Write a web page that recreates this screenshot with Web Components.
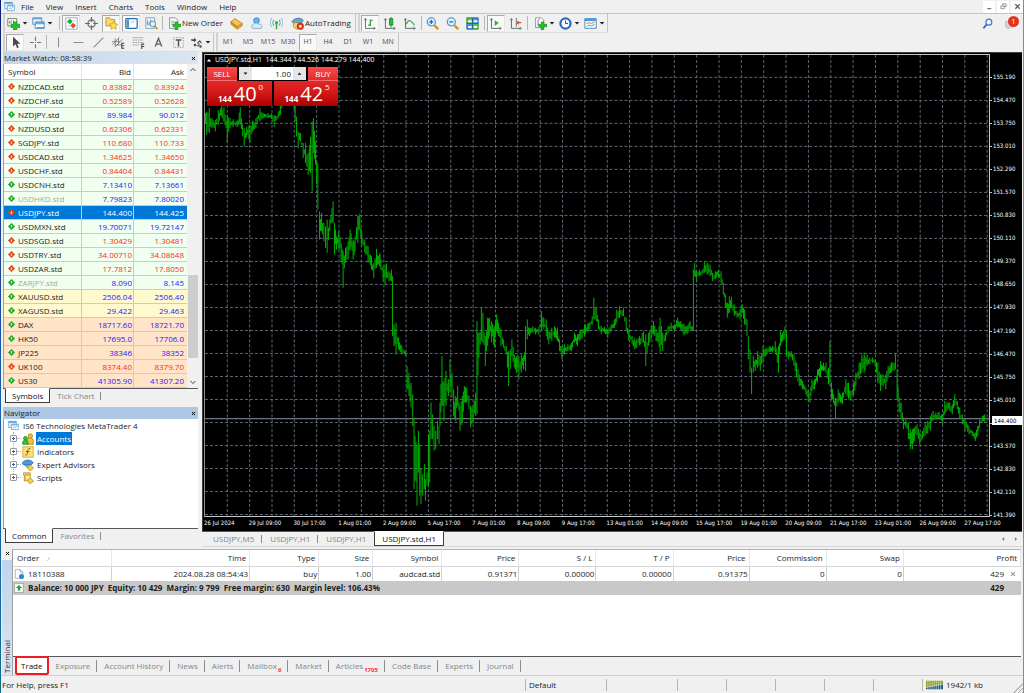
<!DOCTYPE html>
<html lang="en">
<head>
<meta charset="utf-8">
<meta name="viewport" content="width=device-width, initial-scale=1">
<title>MetaTrader 4</title>
<style>
    html, body {
        margin: 0;
        height: 100%;
    }
    body {
        --face: #f0f0f0;
        --line: #c4c4c4;
        --edge: #55585c;
        --muted: #858585;
        --up: #2222ff;
        --down: #ff2a20;
        --accent: #0078d7;
        --chart-font: "DejaVu Sans Condensed", "DejaVu Sans", sans-serif;
        font-family: "Open Sans", "Noto Sans", sans-serif;
        font-size: 8px;
        line-height: 12px;
        color: #1c1c1c;
        background: var(--face);
    }
</style>
</head>
<body>
<terminal-app></terminal-app>

<script>
const frame = '<path d="M3 2v12h12M1.5 4 3 2l1.5 2M13 12.500l2 1.500-2 1.500" fill="none" stroke="#5f6c6c" stroke-width="1.200"/>';

const ICONS = {
    app: '<path d="M1 2h11v9H1z" fill="#e8f4fd" stroke="#4a9bd0"/><path d="M1 2h11v2H1z" fill="#4a9bd0"/><path d="M5 6h10v8H5z" fill="#fff" stroke="#4a9bd0"/><path d="M5 6h10v2H5z" fill="#6db5e2"/><path d="M7 12l2-2 2 1 2-2" fill="none" stroke="#4a9bd0"/>',
    newChart: '<path d="M1 2h11v9H1z" fill="#fff" stroke="#4d6f4f"/><path d="M3 8V5M5 9V4M8 7V4" stroke="#2d9b3a"/><path d="M8 6h4v3h4v4h-4v3H8v-3H5V9h3z" fill="#25c22c" stroke="#0b7d16" stroke-width=".7"/>',
    profiles: '<path d="M1 1h11v8H1z" fill="#eef6fd" stroke="#3b7cb5"/><path d="M1 1h11v2H1z" fill="#69a7dc"/><path d="M4 6h11v8H4z" fill="#fff" stroke="#3b7cb5"/><path d="M4 6h11v3H4z" fill="#69a7dc"/><path d="M6 13h9" stroke="#3b7cb5"/>',
    watch: '<path d="M1 1h14v14H1z" fill="#fff" stroke="#6ea3d6"/><path d="M6 2l3.500 3.500L6 9 2.500 5.500z" fill="#1ea92f"/><path d="M10 7l3.500 3.500L10 14l-3.500-3.500z" fill="#e44b22"/><path d="M9 5h4M3 11h3" stroke="#b9cde0"/>',
    target: '<circle cx="8" cy="8" r="4.500" fill="none" stroke="#6b6b6b" stroke-width="1.500"/><path d="M8 0v6M8 10v6M0 8h6M10 8h6" stroke="#6b6b6b" stroke-width="1.500"/>',
    folderStar: '<path d="M1 3V1h5l1 2h5v8H1z" fill="#ffd96b" stroke="#c28a18"/><path d="M10.500 5l1.700 3.300 3.600.5-2.600 2.600.6 3.600-3.300-1.700L7.200 15l.6-3.600L5.200 8.800l3.600-.5z" fill="#ffe04c" stroke="#c48a12" stroke-width=".8"/>',
    panel: '<rect x="1" y="2" width="14" height="12" rx="1" fill="#fff" stroke="#2d6ba8" stroke-width="1.500"/><path d="M2 3h3v10H2z" fill="#4c93d8"/><path d="M7 5h6M7 7h4" stroke="#b9cde0"/>',
    tester: '<path d="M1 1h11v13H1z" fill="#eef5fb" stroke="#7195b7"/><path d="M3 4v6M5 6v5M7 3v6" stroke="#5584b5"/><circle cx="9.500" cy="8.500" r="3.500" fill="#d9efff" stroke="#4b7ba9"/><path d="M12 11l3.500 4" stroke="#c98e23" stroke-width="2"/>',
    order: '<path d="M2 1h7l3 3v10H2z" fill="#fff" stroke="#71817f"/><path d="M4 5h4M4 7h6M4 9h3" stroke="#8b9b99"/><path d="M9 6h3v3h4v3h-4v4H9v-4H6V9h3z" fill="#25c22c" stroke="#0b7d16" stroke-width=".7"/>',
    gold: '<path d="M1 6 6 2l9 6-6 4z" fill="#f8c64f" stroke="#b07a12"/><path d="M1 6l8 6v3L1 9z" fill="#d9971e" stroke="#b07a12" stroke-width=".7"/><path d="M9 12l6-4v3l-6 4z" fill="#f0ab2c" stroke="#b07a12" stroke-width=".7"/>',
    cloud: '<circle cx="8" cy="4.500" r="3.500" fill="#65b5ee" stroke="#2f7dc0"/><path d="M5 7h6v4H5z" fill="#65b5ee"/><path d="M3 14a3 3 0 0 1 1-5c1-2 6-2 7 0a3 3 0 0 1 3 5z" fill="#d8e9f8" stroke="#7ba6cd"/>',
    signal: '<circle cx="8" cy="7" r="2" fill="#39b54a"/><path d="M5 3.500a5 5 0 0 0 0 7M11 3.500a5 5 0 0 1 0 7" fill="none" stroke="#4a9bd0" stroke-width="1.300"/><path d="M2.500 1.500a8 8 0 0 0 0 11M13.500 1.500a8 8 0 0 1 0 11" fill="none" stroke="#9ac6e6" stroke-width="1.300"/><path d="M8 8v7" stroke="#39b54a" stroke-width="2"/>',
    auto: '<path d="M1 6c3-5 10-6 14-2l-2 3H4z" fill="#5aa9dd" stroke="#2a6ea6"/><path d="M3 7h9v5l-5 3-4-3z" fill="#f7cf63" stroke="#bb8a20"/><circle cx="11.500" cy="11.500" r="4" fill="#e03423" stroke="#a51c10" stroke-width=".7"/><path d="M10 10h3v3h-3z" fill="#fff"/>',
    bars: frame + '<path d="M9 3v8M9 4h3M9 10H6.500" stroke="#1b9e2a" stroke-width="1.500" fill="none"/>',
    candle: frame + '<path d="M10 0v13" stroke="#14801f"/><path d="M8 2h4v8H8z" fill="#1fc531" stroke="#14801f"/>',
    line: frame + '<path d="M4 9c3-7 6-5 10 1" fill="none" stroke="#3fa551" stroke-width="1.500"/>',
    zoomIn: '<path d="M10 10l5 5" stroke="#d39a2a" stroke-width="3"/><circle cx="6.500" cy="6" r="5" fill="#dff0fd" stroke="#3c86cb" stroke-width="1.300"/><path d="M4 6h5M6.500 3.500v5" stroke="#1d67b5" stroke-width="1.500"/>',
    zoomOut: '<path d="M10 10l5 5" stroke="#d39a2a" stroke-width="3"/><circle cx="6.500" cy="6" r="5" fill="#dff0fd" stroke="#3c86cb" stroke-width="1.300"/><path d="M4 6h5" stroke="#1d67b5" stroke-width="1.500"/>',
    tile: '<path d="M1 1h7v7H1zM8 8h7v7H8z" fill="#55c43f" stroke="#2b7f21"/><path d="M8 1h7v7H8zM1 8h7v7H1z" fill="#4a8fe6" stroke="#2458a6"/><path d="M2.500 4H7v2.500H2.500zM9.500 4H14v2.500H9.500zM2.500 11H7v2.500H2.500zM9.500 11H14v2.500H9.500z" fill="#eef6ff"/>',
    scroll: frame + '<path d="M7 4l5 3.500L7 11z" fill="#2cab3a"/>',
    shift: frame + '<path d="M9 1v11" stroke="#4b5a5a"/><path d="M15 7h-5M12 5l-2 2 2 2" stroke="#d2502c" stroke-width="1.500" fill="none"/>',
    indicators: '<path d="M2 1h7l3 3v9H2z" fill="#fff" stroke="#718190"/><path d="M7 3c-2 0-2 1-2 3v5" fill="none" stroke="#55636d"/><path d="M9 6h3v3h4v3h-4v4H9v-4H6V9h3z" fill="#25c22c" stroke="#0b7d16" stroke-width=".7"/>',
    clock: '<circle cx="8" cy="8" r="7" fill="#2e75c8" stroke="#174f91"/><circle cx="8" cy="8" r="4.800" fill="#f5faff"/><path d="M8 4.500V8h3" fill="none" stroke="#32455c" stroke-width="1.200"/>',
    template: '<path d="M1 2h14v12H1z" fill="#f4faff" stroke="#3a7cbc"/><path d="M1 2h14v3H1z" fill="#4d97dc"/><path d="M3 8l3-1 3 1 4-2" fill="none" stroke="#d05a41"/><path d="M3 12l3-2 3 1 4-2" fill="none" stroke="#36a455"/>',
    cursor: '<path d="M5 1v12l3-3 2 5 2-1-2-4.500h4z" fill="#474747"/>',
    cross: '<path d="M8 1v5M8 10v5M1 8h5M10 8h5" stroke="#757575" stroke-width="1.300"/><path d="M7.500 7.500h1v1h-1z" fill="#757575"/>',
    vline: '<path d="M8 2v12" stroke="#8a8a8a" stroke-width="1.300"/>',
    hline: '<path d="M2 8h12" stroke="#8a8a8a" stroke-width="1.300"/>',
    trend: '<path d="M2 14 14 2" stroke="#8a8a8a" stroke-width="1.300"/>',
    channel: '<path d="M0 11 9 2M3 14 13 4M0 7h10M3 11h9M4 3v9M8 2v9" stroke="#777"/><path d="M15 9h-3v6h3M12 12h3" fill="none" stroke="#444" stroke-width="1.300"/>',
    fibo: '<path d="M1 2h13M1 5h13M1 8h13M1 11h9" stroke="#888" stroke-dasharray="2 1"/><path d="M15 10h-3v6M12 13h3" fill="none" stroke="#444" stroke-width="1.300"/>',
    textA: '<path d="M4 13 8 3l4 10M5.500 10h5" fill="none" stroke="#666" stroke-width="1.800"/>',
    label: '<path d="M2 2h12v12H2z" fill="none" stroke="#888" stroke-dasharray="1.500 1.500"/><path d="M4.500 5h7M8 5v8" stroke="#555" stroke-width="1.800"/>',
    arrows: '<path d="M1 4h4V2l3 3-3 3V6H2z" fill="#4c4c4c"/><path d="M9 9l3-3 2 3M11 9v3H8" fill="none" stroke="#4c4c4c" stroke-width="1.300"/><circle cx="6" cy="11" r="1.500" fill="#4c4c4c"/><circle cx="13" cy="13" r="1.500" fill="#4c4c4c"/>',
    search: '<path d="M7 9l-5 6" stroke="#2b5cc4" stroke-width="2.500"/><circle cx="10" cy="6" r="4.300" fill="#eef4ff" stroke="#3d6fd6" stroke-width="1.600"/>',
    chat: '<path d="M1 5h11v8H8l-4 3v-3H1z" fill="#d7d7de" stroke="#a9a9b4"/>',
    up: '<path d="M8 0l8 8-8 8-8-8z" fill="#1fa32e"/><path d="M8 4l3 3.500H9V11H7V7.500H5z" fill="#c9f5c9"/>',
    down: '<path d="M8 0l8 8-8 8-8-8z" fill="#d9481a"/><path d="M8 12l3-3.500H9V5H7v3.500H5z" fill="#ffd2bd"/>',
    accounts: '<circle cx="11" cy="4" r="3" fill="#f2c33c" stroke="#a87b14"/><path d="M7 15V9c0-3 8-3 8 0v6z" fill="#f2c33c" stroke="#a87b14"/><circle cx="4.500" cy="7" r="2.500" fill="#35c43f" stroke="#188322"/><path d="M1 15v-3c0-3 7-3 7 0v3z" fill="#35c43f" stroke="#188322"/>',
    fx: '<path d="M1 1h14v14H1z" fill="#fbe27c" stroke="#c9a227"/><path d="M11 3.500c-3-1-3 2-3.500 4.500S6.500 13 4.500 12M5 7.500h5" fill="none" stroke="#7a5b0c" stroke-width="1.300"/>',
    expert: '<path d="M0 6c3-6 12-6 15-1l-3 3H3z" fill="#4c9ad6" stroke="#2a6ea6"/><path d="M4 8h7l-1 3H6z" fill="#8cc3ec" stroke="#2a6ea6" stroke-width=".7"/><path d="M11 8l4.500 4-4.500 4-4-4z" fill="#f7cf4c" stroke="#b98a18"/>',
    script: '<path d="M2 1h9v3H5v8H3V4H2z" fill="#f6d76b" stroke="#bb8f22"/><path d="M4 4h7v7H4z" fill="#fae7a0" stroke="#bb8f22"/><path d="M11 8l4.500 4-4.500 4-4-4z" fill="#f7cf4c" stroke="#b98a18"/>',
    trade: '<path d="M2 1h8l4 4v10H2z" fill="#fff" stroke="#7d8a96"/><path d="M10 1v4h4" fill="none" stroke="#7d8a96"/><circle cx="12" cy="12" r="4" fill="#2189d6"/>',
    balance: '<path d="M1 1h14v14H1z" fill="#fff" stroke="#8c8c8c"/><path d="M8 3l5 5h-3v4H6V8H3z" fill="#22a52e"/>',
    close: '<path d="M3 3l10 10M13 3 3 13" stroke="currentColor" stroke-width="3"/>',
    minimize: '<path d="M3 13h9" stroke="#5b6470" stroke-width="2.500"/>',
    restore: '<path d="M6 6V2h8v6h-4M2 7h8v6H2z" fill="none" stroke="#5b6470" stroke-width="1.500"/>',
    chevronUp: '<path d="M3 10l5-5 5 5" fill="none" stroke="#404040" stroke-width="2"/>',
    chevronDown: '<path d="M3 6l5 5 5-5" fill="none" stroke="#404040" stroke-width="2"/>',
    left: '<path d="M11 3v10L5 8z" fill="#777"/>',
    right: '<path d="M5 3v10l6-5z" fill="#777"/>',
    triUp: '<path d="M2 12h12L8 5z" fill="currentColor"/>',
    triDown: '<path d="M2 5h12l-6 7z" fill="currentColor"/>',
    connection: '<path d="M0 0h32v6L0 12z" fill="#8aa32a"/><path d="M0 16v-3L32 7v9z" fill="#1f5c84"/><path d="M3.500 0v16M7.500 0v16M11.500 0v16M15.500 0v16M19.500 0v16M23.500 0v16M27.500 0v16" stroke="#f0f0f0"/>'
};

class MtIcon extends HTMLElement {
    constructor() {
        super();
        this.attachShadow({ mode: 'open' });
    }

    connectedCallback() {
        const name = this.getAttribute('name');
        const width = name === 'connection' ? 32 : 16;
        this.shadowRoot.innerHTML = `
            <style>
                :host {
                    display: inline-block;
                    flex: none;
                    width: 13px;
                    height: 13px;
                    white-space: normal;
                }
                svg {
                    display: block;
                    width: 100%;
                    height: 100%;
                }
            </style>
            <svg viewBox="0 0 ${width} 16" aria-hidden="true">${ICONS[name]}</svg>
        `;
    }
}
customElements.define('mt-icon', MtIcon);

class MenuBar extends HTMLElement {
    constructor() {
        super();
        this.attachShadow({ mode: 'open' });
    }

    connectedCallback() {
        const menus = ['File', 'View', 'Insert', 'Charts', 'Tools', 'Window', 'Help'];
        this.shadowRoot.innerHTML = `
            <style>
                :host {
                    display: flex;
                    align-items: center;
                    height: 13px;
                    padding-left: 3px;
                    border-bottom: 1px solid var(--line);
                }
                button {
                    font: inherit;
                    color: inherit;
                    border: 0;
                    padding: 0;
                    background: none;
                }
                .app {
                    width: 11px;
                    height: 11px;
                }
                nav {
                    display: flex;
                    flex: 1;
                }
                nav button {
                    padding: 0 6px;
                }
                .window {
                    display: flex;
                    gap: 2px;
                }
                .window button {
                    display: flex;
                    align-items: center;
                    justify-content: center;
                    width: 12px;
                    height: 12px;
                    background: #fff;
                    color: #5b6470;
                }
                .window mt-icon {
                    width: 7px;
                    height: 7px;
                }
            </style>
            <mt-icon class="app" name="app"></mt-icon>
            <nav>${menus.map(m => `<button>${m}</button>`).join('')}</nav>
            <div class="window">
                <button aria-label="Minimize"><mt-icon name="minimize"></mt-icon></button>
                <button aria-label="Restore"><mt-icon name="restore"></mt-icon></button>
                <button aria-label="Close"><mt-icon name="close"></mt-icon></button>
            </div>
        `;
    }
}
customElements.define('menu-bar', MenuBar);

// Layout of the toolbars: [icon, label, option]; '|' is a separator
const STANDARD = [
    ['newChart', 'New Chart', 'drop'], ['profiles', 'Profiles', 'drop'], '|',
    ['watch', 'Market Watch', 'on'], ['target', 'Data Window'], ['folderStar', 'Navigator', 'on'],
    ['panel', 'Terminal', 'on'], ['tester', 'Strategy Tester'], '|',
    ['order', 'New Order', 'text'], ['gold', 'MetaEditor'], ['cloud', 'Community'],
    ['signal', 'Signals'], ['auto', 'AutoTrading', 'text']
];
const CHARTS = [
    ['bars', 'Bar Chart', 'on'], ['candle', 'Candlesticks'], ['line', 'Line Chart'], '|',
    ['zoomIn', 'Zoom In'], ['zoomOut', 'Zoom Out'], ['tile', 'Tile Windows'], '|',
    ['scroll', 'Auto Scroll', 'on'], ['shift', 'Chart Shift'], '|',
    ['indicators', 'Indicators', 'drop'], ['clock', 'Periods', 'drop'], ['template', 'Templates', 'drop']
];
const LINES = [
    ['cursor', 'Cursor', 'on'], ['cross', 'Crosshair'], '|', ['vline', 'Vertical Line'],
    ['hline', 'Horizontal Line'], ['trend', 'Trendline'], ['channel', 'Equidistant Channel'],
    ['fibo', 'Fibonacci Retracement'], ['textA', 'Text'], ['label', 'Text Label'], ['arrows', 'Arrows', 'drop']
];
const PERIODS = ['M1', 'M5', 'M15', 'M30', 'H1', 'H4', 'D1', 'W1', 'MN'];

class ToolBars extends HTMLElement {
    constructor() {
        super();
        this.attachShadow({ mode: 'open' });
    }

    tool(item) {
        if (item === '|') return '<span class="sep"></span>';
        const [icon, label, option = ''] = item;
        const arrow = option === 'drop' ? '<mt-icon class="arrow" name="triDown"></mt-icon>' : '';
        return `<button class="${option}" aria-label="${label}"><mt-icon name="${icon}"></mt-icon>${option === 'text' ? label : arrow}</button>`;
    }

    connectedCallback() {
        const group = items => `<div class="group">${items.map(i => this.tool(i)).join('')}</div>`;
        this.shadowRoot.innerHTML = `
            <style>
                :host {
                    display: block;
                    padding-left: 2px;
                }
                .row {
                    display: flex;
                    height: 19px;
                }
                .group {
                    display: flex;
                    align-items: center;
                    box-sizing: border-box;
                    border-left: 2px solid #d2d2d2;
                    border-right: 1px solid var(--line);
                    border-bottom: 1px solid #dcdcdc;
                    margin-right: 2px;
                }
                button {
                    display: flex;
                    align-items: center;
                    justify-content: center;
                    box-sizing: border-box;
                    width: 20px;
                    height: 17px;
                    padding: 0;
                    border: 1px solid transparent;
                    background: none;
                    font: inherit;
                    color: inherit;
                }
                .on {
                    background: #f9f9f9;
                    border-color: #a9a9a9 #e6e6e6 #e6e6e6 #a9a9a9;
                    width: 18px;
                    margin: 0 1px;
                }
                .drop {
                    width: 25px;
                    gap: 2px;
                }
                .drop + .sep {
                    margin-left: 4px;
                }
                .sep + .drop {
                    margin-left: 3px;
                }
                .text {
                    width: auto;
                    padding: 0 3px;
                    gap: 1px;
                }
                .arrow {
                    width: 6px;
                    height: 6px;
                }
                .sep {
                    width: 1px;
                    height: 14px;
                    margin: 0 1px;
                    background: #b8b8b8;
                }
                .period {
                    font-size: 7px;
                    color: #4c4c4c;
                }
                .extras {
                    display: flex;
                    align-items: center;
                    gap: 3px;
                    margin-left: auto;
                    padding-right: 3px;
                }
                .extras button {
                    position: relative;
                }
                .extras mt-icon {
                    width: 11px;
                    height: 11px;
                }
                .badge {
                    position: absolute;
                    top: 0;
                    right: 0;
                    width: 11px;
                    height: 11px;
                    border-radius: 50%;
                    background: #e8321c;
                    color: #fff;
                    font-size: 7px;
                    line-height: 11px;
                    text-align: center;
                }
            </style>
            <div class="row">
                ${group(STANDARD)}
                ${group(CHARTS)}
                <div class="extras">
                    <button aria-label="Search"><mt-icon name="search"></mt-icon></button>
                    <button aria-label="Messages"><mt-icon name="chat"></mt-icon><span class="badge">1</span></button>
                </div>
            </div>
            <div class="row">
                ${group(LINES)}
                <div class="group">
                    ${PERIODS.map(p => `<button class="period ${p === 'H1' ? 'on' : ''}">${p}</button>`).join('')}
                </div>
            </div>
        `;
    }
}
customElements.define('tool-bars', ToolBars);

class TabStrip extends HTMLElement {
    constructor() {
        super();
        this.attachShadow({ mode: 'open' });
    }

    connectedCallback() {
        // "Mailbox:6" puts the count 6 after the tab's name
        const tabs = this.getAttribute('tabs').split('|').map(t => t.split(':'));
        const active = Number(this.getAttribute('active') || 0);
        this.shadowRoot.innerHTML = `
            <style>
                :host {
                    --pad: 7px;
                    display: flex;
                    flex: none;
                    align-items: stretch;
                    height: 15px;
                    padding-left: 2px;
                    box-shadow: inset 0 1px 0 var(--edge);
                    background: var(--face);
                }
                :host([wide]) {
                    --pad: 8px;
                    padding-left: 3px;
                }
                button {
                    display: flex;
                    align-items: center;
                    position: relative;
                    box-sizing: border-box;
                    padding: 0 var(--pad);
                    border: 0;
                    background: none;
                    font: inherit;
                    color: var(--muted);
                }
                button:not(.active)::after {
                    content: "";
                    position: absolute;
                    right: 0;
                    top: 4px;
                    bottom: 3px;
                    width: 1px;
                    background: #8c8c8c;
                }
                button.before::after {
                    display: none;
                }
                .active {
                    color: #111;
                    background: #fff;
                    padding: 0 calc(var(--pad) - 1px);
                    border: 1px solid #3c3c3c;
                    border-top-color: #fff;
                }
                :host([marked]) {
                    height: 19px;
                }
                :host([marked]) .active {
                    padding: 0 4px;
                    border: 2px solid #ee1c24;
                    border-radius: 2px;
                }
                sub {
                    align-self: flex-end;
                    margin-left: 1px;
                    font-size: 6px;
                    line-height: 9px;
                    font-weight: bold;
                    color: #ff3030;
                }
            </style>
            ${tabs.map(([name, count], i) => `<button role="tab" aria-selected="${i === active}" class="${i === active ? 'active' : i === active - 1 ? 'before' : ''}">${name}${count ? `<sub>${count}</sub>` : ''}</button>`).join('')}
            <slot></slot>
        `;
    }
}
customElements.define('tab-strip', TabStrip);

class PanelTitle extends HTMLElement {
    constructor() {
        super();
        this.attachShadow({ mode: 'open' });
    }

    connectedCallback() {
        this.shadowRoot.innerHTML = `
            <style>
                :host {
                    display: flex;
                    flex: none;
                    justify-content: space-between;
                    align-items: center;
                    height: 12px;
                    padding: 0 2px 0 1px;
                    background: linear-gradient(90deg, #c6d5e6, #dce6f2);
                }
                :host([focused]) {
                    background: #adc8e4;
                }
                button {
                    display: flex;
                    padding: 0;
                    border: 0;
                    background: none;
                    color: #000;
                }
                mt-icon {
                    width: 5px;
                    height: 5px;
                }
            </style>
            <span><slot></slot></span>
            <button aria-label="Close panel"><mt-icon name="close"></mt-icon></button>
        `;
    }
}
customElements.define('panel-title', PanelTitle);

// symbol, bid, ask, tick direction, group
const QUOTES = [
    ['NZDCAD.std', '0.83882', '0.83924', 'down'],
    ['NZDCHF.std', '0.52589', '0.52628', 'down'],
    ['NZDJPY.std', '89.984', '90.012', 'up'],
    ['NZDUSD.std', '0.62306', '0.62331', 'down'],
    ['SGDJPY.std', '110.680', '110.733', 'down'],
    ['USDCAD.std', '1.34625', '1.34650', 'down'],
    ['USDCHF.std', '0.84404', '0.84431', 'down'],
    ['USDCNH.std', '7.13410', '7.13661', 'up'],
    ['USDHKD.std', '7.79823', '7.80020', 'up', 'idle'],
    ['USDJPY.std', '144.400', '144.425', 'down', 'selected'],
    ['USDMXN.std', '19.70071', '19.72147', 'up'],
    ['USDSGD.std', '1.30429', '1.30481', 'down'],
    ['USDTRY.std', '34.00710', '34.08648', 'down'],
    ['USDZAR.std', '17.7812', '17.8050', 'down'],
    ['ZARJPY.std', '8.090', '8.145', 'up', 'idle'],
    ['XAUUSD.std', '2506.04', '2506.40', 'up', 'metal'],
    ['XAGUSD.std', '29.422', '29.463', 'up', 'metal'],
    ['DAX', '18717.60', '18721.70', 'up', 'index'],
    ['HK50', '17695.0', '17706.0', 'up', 'index'],
    ['JP225', '38346', '38352', 'up', 'index'],
    ['UK100', '8374.40', '8379.70', 'down', 'index'],
    ['US30', '41305.90', '41307.20', 'up', 'index']
];

class MarketWatch extends HTMLElement {
    constructor() {
        super();
        this.attachShadow({ mode: 'open' });
    }

    connectedCallback() {
        this.shadowRoot.innerHTML = `
            <style>
                :host {
                    display: flex;
                    flex-direction: column;
                }
                .list {
                    display: flex;
                    background: #fff;
                    border-left: 1px solid #a0a0a0;
                }
                table {
                    flex: 1;
                    table-layout: fixed;
                    border-collapse: separate;
                    border-spacing: 0;
                }
                th, td {
                    box-sizing: border-box;
                    height: 14px;
                    padding: 0 1px 0 0;
                    border-bottom: 1px solid #c9cdc9;
                    border-right: 1px solid #c9cdc9;
                    text-align: right;
                    font-weight: normal;
                    line-height: 13px;
                }
                th {
                    height: 16px;
                    padding-right: 2px;
                    border-right-color: #e2e2e2;
                }
                th:first-child, td:first-child {
                    width: 78px;
                    text-align: left;
                    padding-left: 4px;
                }
                th:nth-child(2) { width: 52px; }
                th:last-child, td:last-child {
                    padding-right: 3px;
                    border-right: 0;
                }
                tr { background: #f0fff0; }
                thead tr { background: #fff; }
                td { color: var(--up); }
                .down td { color: var(--down); }
                tr td:first-child { color: #1c1c1c; }
                tr.idle td:first-child { color: #a3a8a3; }
                .metal { background: #fffacd; }
                .index { background: #ffe4c8; }
                .selected { background: var(--accent); }
                tr.selected td { color: #fff; }
                .symbol {
                    display: flex;
                    align-items: center;
                    gap: 3px;
                }
                .symbol mt-icon {
                    width: 7px;
                    height: 7px;
                }
                .scroll {
                    display: flex;
                    flex-direction: column;
                    align-items: center;
                    width: 11px;
                    background: var(--face);
                }
                .scroll mt-icon {
                    width: 8px;
                    height: 12px;
                }
                .thumb {
                    width: 10px;
                    flex: 83;
                    background: #cdcdcd;
                }
                .before { flex: 200; }
                .after { flex: 18; }
            </style>
            <panel-title>Market Watch: 08:58:39</panel-title>
            <div class="list">
                <table>
                    <thead><tr><th>Symbol</th><th>Bid</th><th>Ask</th></tr></thead>
                    <tbody>
                        ${QUOTES.map(([symbol, bid, ask, tick, kind = '']) => `
                            <tr class="${tick} ${kind}"><td><span class="symbol"><mt-icon name="${tick}"></mt-icon>${symbol}</span></td><td>${bid}</td><td>${ask}</td></tr>
                        `).join('')}
                    </tbody>
                </table>
                <div class="scroll" aria-hidden="true">
                    <mt-icon name="chevronUp"></mt-icon>
                    <span class="before"></span>
                    <span class="thumb"></span>
                    <span class="after"></span>
                    <mt-icon name="chevronDown"></mt-icon>
                </div>
            </div>
            <tab-strip tabs="Symbols|Tick Chart"></tab-strip>
        `;
    }
}
customElements.define('market-watch', MarketWatch);

class NavigatorTree extends HTMLElement {
    constructor() {
        super();
        this.attachShadow({ mode: 'open' });
    }

    connectedCallback() {
        const nodes = [['accounts', 'Accounts'], ['fx', 'Indicators'], ['expert', 'Expert Advisors'], ['script', 'Scripts']];
        this.shadowRoot.innerHTML = `
            <style>
                :host {
                    display: flex;
                    flex-direction: column;
                    flex: 1;
                }
                .tree {
                    flex: 1;
                    padding-left: 4px;
                    background: #fff;
                    border-left: 1px solid #a0a0a0;
                    line-height: 13px;
                }
                .root, li {
                    display: flex;
                    align-items: center;
                    height: 13px;
                }
                ul {
                    list-style: none;
                    margin: 0 0 0 5px;
                    padding: 0;
                    border-left: 1px dotted #b0b0b0;
                    height: 46px;
                }
                .root mt-icon {
                    width: 11px;
                    height: 11px;
                    margin-right: 4px;
                }
                li mt-icon {
                    width: 12px;
                    height: 12px;
                    margin: 0 2px 0 1px;
                }
                .box {
                    box-sizing: border-box;
                    width: 7px;
                    height: 7px;
                    margin-left: -4px;
                    border: 1px solid #9a9a9a;
                    border-radius: 1px;
                    background:
                        linear-gradient(#3c5fa8, #3c5fa8) center / 3px 1px no-repeat,
                        linear-gradient(#3c5fa8, #3c5fa8) center / 1px 3px no-repeat,
                        #fff;
                }
                .stem {
                    width: 4px;
                    border-top: 1px dotted #b0b0b0;
                }
                .name { padding: 0 1px; }
                .current {
                    background: var(--accent);
                    color: #fff;
                }
            </style>
            <panel-title focused>Navigator</panel-title>
            <div class="tree">
                <div class="root"><mt-icon name="app"></mt-icon>IS6 Technologies MetaTrader 4</div>
                <ul>
                    ${nodes.map(([icon, name], i) => `
                        <li><span class="box"></span><span class="stem"></span><mt-icon name="${icon}"></mt-icon><span class="name ${i === 0 ? 'current' : ''}">${name}</span></li>
                    `).join('')}
                </ul>
            </div>
            <tab-strip tabs="Common|Favorites"></tab-strip>
        `;
    }
}
customElements.define('navigator-tree', NavigatorTree);

class OneClickTrade extends HTMLElement {
    constructor() {
        super();
        this.attachShadow({ mode: 'open' });
    }

    connectedCallback() {
        this.shadowRoot.innerHTML = `
            <style>
                :host {
                    display: flex;
                    gap: 2px;
                    position: relative;
                    width: 131px;
                    height: 39px;
                    background: #000;
                    font-family: "Open Sans", sans-serif;
                    font-size: 8px;
                }
                .deal {
                    flex: 1;
                    display: flex;
                    flex-direction: column;
                    align-items: flex-start;
                    padding: 0;
                    border: 0;
                    color: #fff;
                    font: inherit;
                    background: linear-gradient(#fb4b4b, #e02626 38%, #d81c1c 60%, #b00000);
                }
                .deal.buy { align-items: flex-end; }
                .side {
                    width: 30px;
                    height: 14px;
                    line-height: 14px;
                    text-align: center;
                    border-bottom: 1px solid #f47070;
                    box-sizing: border-box;
                }
                .price {
                    display: flex;
                    align-items: flex-end;
                    width: 100%;
                    height: 25px;
                    box-sizing: border-box;
                    padding-left: 11px;
                    line-height: 24px;
                }
                .price b {
                    line-height: 14px;
                    margin-right: 2px;
                }
                .price span { font-size: 20px; }
                .price sup {
                    align-self: flex-start;
                    margin-left: 2px;
                    font-size: 8px;
                    line-height: 12px;
                }
                .volume {
                    display: flex;
                    position: absolute;
                    left: 30px;
                    right: 30px;
                    top: 0;
                    height: 13px;
                    padding: 0 2px 1px;
                    background: #000;
                }
                .volume button {
                    display: flex;
                    align-items: center;
                    justify-content: center;
                    width: 13px;
                    padding: 0;
                    border: 0;
                    color: #111;
                    background: #e4e6e8;
                }
                .volume mt-icon {
                    width: 5px;
                    height: 5px;
                }
                input {
                    flex: 1;
                    min-width: 0;
                    padding: 0 2px;
                    border: 0;
                    font: inherit;
                    text-align: right;
                    color: #222;
                    background: #fff;
                }
            </style>
            <button class="deal sell"><span class="side">SELL</span><span class="price"><b>144</b><span>40</span><sup>0</sup></span></button>
            <button class="deal buy"><span class="side">BUY</span><span class="price"><b>144</b><span>42</span><sup>5</sup></span></button>
            <div class="volume">
                <button aria-label="Decrease volume"><mt-icon name="triDown"></mt-icon></button>
                <input type="text" aria-label="Volume" value="1.00">
                <button aria-label="Increase volume"><mt-icon name="triUp"></mt-icon></button>
            </div>
        `;
    }
}
customElements.define('one-click-trade', OneClickTrade);

// Price path: each run has an origin and [x, high, low] knots in thirds of a unit
const RUNS = [
    { x: -5, y: -5, knots: [
        [13,195,225],[20,185,255],[28,175,250],[36,205,235],[46,210,245],[55,180,225],[65,165,200],[72,170,215],
        [82,195,280],[90,205,235],[100,208,232],[112,212,232],[121,172,225],[128,225,260],[133,235,290],[140,230,262],
        [150,225,280],[158,212,245],[168,205,235],[180,175,215],[190,190,205],[205,190,205],[215,190,208],[223,195,232],
        [235,185,205],[242,165,195],[250,140,165],[280,140,165],[286,165,215],[290,200,260],[295,245,295],[302,250,275],
        [310,280,325],[317,280,340],[325,310,375],[332,260,370],[337,215,425],[341,205,310],[347,275,345],[354,340,480],
        [359,485,570],[365,490,545],[372,520,575],[377,530,595],[382,510,610],[390,510,545],[400,455,520],[404,520,615],
        [410,560,600],[417,545,600],[424,580,635],[430,605,715],[437,595,640],[445,575,630],[451,540,600],[460,570,630],
        [466,560,605],[474,500,580],[480,492,540],[486,545,590],[495,570,610],[505,590,640],[515,620,660],[522,640,685],
        [530,598,655],[540,610,650]] },
    { x: 175, y: 185, knots: [
        [0,45,80],[10,80,125],[16,75,137],[20,72,115],[28,95,125],[35,90,125],[38,110,290],[43,255,320],[49,250,345],
        [56,295,330],[66,318,345],[78,335,350],[82,380,450],[88,400,470],[94,430,505],[99,465,560],[103,540,750],
        [112,620,800],[116,575,700],[120,615,770],[124,690,795],[129,705,770],[134,675,750],[137,720,785],[142,700,740],
        [146,585,745],[150,575,730],[154,490,600],[158,525,600],[163,560,635],[168,575,630],[173,545,600],[178,560,615],
        [181,490,560],[187,350,500],[193,430,545],[199,395,500],[206,420,470],[211,360,460],[217,400,475],[222,450,530],
        [228,470,545],[234,440,500],[241,500,575],[248,470,550],[254,440,490],[261,445,490],[268,470,510],[273,500,565],
        [280,500,550],[288,460,530],[292,245,525],[298,280,355],[305,205,305],[310,220,310],[317,290,380],[324,235,320],
        [330,235,290],[336,245,310],[345,260,325],[351,225,275],[357,250,290],[364,270,320],[372,300,325],[380,320,345],
        [387,335,440],[392,330,390],[397,300,350],[404,345,385],[411,350,400],[418,350,420],[425,345,400],[432,350,390],
        [438,260,395],[443,240,300],[450,265,290],[460,260,280],[468,265,285],[478,262,285],[486,215,275],[493,235,270],
        [500,240,290],[508,275,315],[517,265,305],[525,260,295],[534,265,305],[540,300,335],[547,320,360],[555,315,345],
        [565,315,335],[576,310,335],[585,280,310],[594,285,320],[604,270,300],[615,255,290],[628,250,275],[638,230,255],
        [643,175,240],[650,205,245],[657,240,270],[665,260,285],[675,262,280],[685,270,295],[695,255,275],[705,240,265],
        [712,210,250],[720,200,235],[732,205,230],[740,235,275],[748,270,305],[758,290,315],[766,295,330],[772,300,325]] },
    { x: 435, y: 185, knots: [
        [0,290,318],[12,275,310],[19,285,380],[27,280,320],[35,260,300],[42,245,285],[50,270,305],[56,280,310],
        [62,235,340],[70,280,335],[78,280,305],[86,260,280],[95,250,275],[105,255,275],[115,235,265],[124,245,270],
        [134,255,288],[143,260,285],[152,245,270],[160,262,275],[162,90,275],[166,70,110],[172,95,125],[180,90,110],
        [188,92,105],[195,65,100],[203,70,105],[212,75,110],[220,100,125],[228,95,118],[237,92,115],[245,95,130],
        [252,130,165],[258,165,205],[264,190,235],[270,170,220],[277,172,205],[285,195,230],[293,215,235],[302,210,240],
        [309,195,220],[316,210,255],[323,240,290],[327,290,360],[332,330,400],[337,385,465],[342,350,400],[348,360,395],
        [355,335,385],[363,350,395],[371,320,370],[380,325,350],[390,320,340],[400,320,340],[408,305,340],[414,340,370],
        [418,320,400],[424,275,320],[430,280,305],[437,262,300],[442,275,350],[447,335,360],[456,335,355],[464,345,380],
        [472,370,415],[480,405,440],[490,425,450],[500,445,465],[507,455,485],[512,460,490],[518,420,455],[526,420,450],
        [535,390,430],[544,365,410],[553,370,395],[560,370,400],[568,385,435],[572,305,440],[577,430,480],[583,465,490],
        [589,475,537],[597,450,490],[604,465,490],[610,460,495],[620,420,465],[628,430,480],[635,455,485],[643,430,470],
        [650,400,440],[660,370,420],[668,345,400],[675,340,400],[684,345,380],[692,355,375],[700,355,370],[708,360,380],
        [716,370,430],[724,405,455],[732,405,440],[740,405,450],[747,380,415],[757,368,400],[765,370,395],[769,342,390],
        [774,390,480],[780,475,520],[786,490,540],[793,535,570],[800,540,565],[808,550,600],[814,570,630],[820,570,630],
        [826,565,605],[834,555,590],[842,580,615],[850,575,600],[858,550,590],[866,545,585],[874,530,575],[882,515,545],
        [890,520,540],[900,518,540],[911,525,555],[917,485,525],[924,488,515],[932,490,515],[940,495,525],[947,465,500],
        [955,485,510],[962,505,540],[970,525,555],[978,540,575],[990,560,585],[1000,575,590],[1009,580,605],
        [1016,560,590],[1022,540,565],[1030,530,550],[1037,525,550]] }
];
const PRICES = ['155.190', '154.470', '153.750', '153.010', '152.290', '151.570', '150.830', '150.110', '149.370', '148.650',
    '147.930', '147.190', '146.470', '145.750', '145.010', '144.290', '143.570', '142.830', '142.110', '141.390'];
const TIMES = ['26 Jul 2024', '29 Jul 09:00', '30 Jul 17:00', '1 Aug 01:00', '2 Aug 09:00', '5 Aug 17:00', '7 Aug 01:00',
    '8 Aug 09:00', '9 Aug 17:00', '13 Aug 01:00', '14 Aug 09:00', '15 Aug 17:00', '19 Aug 01:00', '20 Aug 09:00',
    '21 Aug 17:00', '23 Aug 01:00', '26 Aug 09:00', '27 Aug 17:00'];

class PriceChart extends HTMLElement {
    constructor() {
        super();
        this.attachShadow({ mode: 'open' });
    }

    bars() {
        const knots = RUNS.flatMap(run => run.knots.map(([x, hi, lo]) => [run.x + x / 3, run.y + hi / 3, run.y + lo / 3]));
        let seed = 7;
        const noise = () => {
            seed = (seed * 16807) % 2147483647;
            return seed / 2147483647;
        };
        let d = '';
        knots.forEach(([x, hi, lo], i) => {
            d += `M${x.toFixed(1)} ${hi.toFixed(1)}V${lo.toFixed(1)}`;
            const next = knots[i + 1];
            if (!next) return;
            const steps = Math.round((next[0] - x) / 1.2);
            for (let s = 1; s < steps; s++) {
                const t = s / steps;
                const top = hi + (next[1] - hi) * t;
                const bottom = lo + (next[2] - lo) * t;
                const size = bottom - top;
                const from = top + size * noise() * 0.4;
                const to = bottom - size * noise() * 0.4;
                d += `M${(x + (next[0] - x) * t).toFixed(1)} ${from.toFixed(1)}V${to.toFixed(1)}`;
            }
        });
        return d;
    }

    grid() {
        let d = '';
        for (let i = 0; i < 35; i++) d += `M${(22.3 + i * 22.38).toFixed(1)} 0V462`;
        for (let i = 0; i < 20; i++) d += `M0 ${(22.4 + i * 23.06).toFixed(1)}H785`;
        return d;
    }

    connectedCallback() {
        this.shadowRoot.innerHTML = `
            <style>
                :host {
                    display: grid;
                    grid-template: 1fr 14px / 1fr 32px;
                    flex: 1;
                    min-height: 0;
                    position: relative;
                    padding: 1px 0 0 1px;
                    border-top: 1px solid #3a3d3a;
                    border-left: 1px solid #3a3d3a;
                    background: #000;
                    color: #fff;
                    font-family: var(--chart-font);
                    font-size: 6px;
                    line-height: 10px;
                }
                .plot {
                    position: relative;
                    min-height: 0;
                    border: 1px solid #c8c8c8;
                    border-left-color: #8c8c8c;
                }
                .plot > svg {
                    position: absolute;
                    inset: 0;
                    width: 100%;
                    height: 100%;
                }
                .heading {
                    display: flex;
                    align-items: center;
                    gap: 3px;
                    position: absolute;
                    left: 1px;
                    top: 0;
                    white-space: pre;
                    font-family: "Open Sans", sans-serif;
                    font-size: 7px;
                }
                .heading mt-icon {
                    width: 6px;
                    height: 6px;
                }
                one-click-trade {
                    position: absolute;
                    left: 2px;
                    top: 12px;
                }
                .prices {
                    display: flex;
                    flex-direction: column;
                    justify-content: space-between;
                    margin-bottom: -3px;
                    padding: 18px 0 0 3px;
                }
                .prices span {
                    position: relative;
                }
                .prices span::before {
                    content: "";
                    position: absolute;
                    left: -3px;
                    top: 5px;
                    width: 2px;
                    height: 1px;
                    background: #c8c8c8;
                }
                .last {
                    position: absolute;
                    right: 0;
                    top: 76%;
                    width: 30px;
                    height: 9px;
                    line-height: 9px;
                    padding-left: 2px;
                    box-sizing: border-box;
                    background: #fff;
                    color: #000;
                }
                .times {
                    display: flex;
                    line-height: 12px;
                    white-space: nowrap;
                }
                .times span {
                    flex: 0 0 5.690%;
                    width: 0;
                }
            </style>
            <div class="plot">
                <svg viewBox="0 0 785 462" preserveAspectRatio="none" fill="none">
                    <path d="${this.grid()}" stroke="#5c6672" stroke-dasharray="3 2"/>
                    <path d="M0 364.500H785" stroke="#8b93a3"/>
                    <path d="${this.bars()}" stroke="#00b400"/>
                </svg>
                <div class="heading"><mt-icon name="triUp"></mt-icon><span>USDJPY.std,H1  144.344 144.526 144.279 144.400</span></div>
                <one-click-trade></one-click-trade>
            </div>
            <div class="prices">${PRICES.map(p => `<span>${p}</span>`).join('')}</div>
            <div class="times">${TIMES.map(t => `<span>${t}</span>`).join('')}</div>
            <div class="last">144.400</div>
        `;
    }
}
customElements.define('price-chart', PriceChart);

const COLUMNS = [
    ['Order', 99, '18110388'], ['Time', 138, '2024.08.28 08:54:43'], ['Type', 69, 'buy'], ['Size', 54, '1.00'],
    ['Symbol', 69, 'audcad.std'], ['Price', 77, '0.91371'], ['S / L', 77, '0.00000'], ['T / P', 77, '0.00000'],
    ['Price', 76, '0.91375'], ['Commission', 77, '0'], ['Swap', 77, '0'], ['Profit', 117, '429']
];

class TradeTerminal extends HTMLElement {
    constructor() {
        super();
        this.attachShadow({ mode: 'open' });
    }

    connectedCallback() {
        const total = COLUMNS.reduce((sum, c) => sum + c[1], 0);
        this.shadowRoot.innerHTML = `
            <style>
                :host {
                    display: flex;
                    height: 126px;
                    padding-right: 2px;
                }
                .grip {
                    display: flex;
                    flex-direction: column;
                    align-items: center;
                    justify-content: space-between;
                    width: 10px;
                    margin-left: 1px;
                    background: linear-gradient(#bcd3ec, #dbe4ee);
                }
                .grip button {
                    display: flex;
                    width: 100%;
                    justify-content: center;
                    padding: 2px 0 4px;
                    border: 0;
                    color: #000;
                    background: var(--face);
                }
                .grip mt-icon {
                    width: 5px;
                    height: 5px;
                }
                .grip span {
                    writing-mode: vertical-rl;
                    transform: rotate(180deg);
                    padding-top: 2px;
                    line-height: 10px;
                    color: #333;
                }
                .main {
                    flex: 1;
                    display: flex;
                    flex-direction: column;
                    border-left: 1px solid #a0a0a0;
                    border-top: 1px solid #b4b4b4;
                }
                .orders {
                    flex: 1;
                    background: #fff;
                }
                table {
                    width: 100%;
                    table-layout: fixed;
                    border-collapse: separate;
                    border-spacing: 0;
                }
                th, td {
                    box-sizing: border-box;
                    height: 14px;
                    padding: 0 1px 0 0;
                    border-right: 1px solid #d0d0d0;
                    text-align: right;
                    font-weight: normal;
                    line-height: 14px;
                    white-space: nowrap;
                }
                th {
                    height: 17px;
                    padding-right: 3px;
                    border-right-color: #e8e8e8;
                    border-bottom: 1px solid #d4d4d4;
                }
                th:first-child, td:first-child {
                    text-align: left;
                    padding-left: 4px;
                }
                td:first-child { padding-left: 1px; }
                td:last-child, tfoot td { border-right: 0; }
                th i {
                    margin-left: 8px;
                    font-size: 6px;
                    color: #999;
                }
                td > div {
                    display: flex;
                    align-items: center;
                    gap: 4px;
                }
                .result { justify-content: flex-end; padding-right: 4px; gap: 6px; }
                .result button {
                    display: flex;
                    padding: 0;
                    border: 0;
                    background: none;
                    color: #999;
                }
                .result mt-icon {
                    width: 6px;
                    height: 6px;
                }
                td > div > mt-icon {
                    width: 10px;
                    height: 10px;
                }
                tfoot td {
                    background: #c8c8c8;
                    font-weight: bold;
                    white-space: pre;
                }
                tfoot td:last-child { padding-right: 17px; }
            </style>
            <div class="grip">
                <button aria-label="Close terminal"><mt-icon name="close"></mt-icon></button>
                <span>Terminal</span>
            </div>
            <div class="main">
                <div class="orders">
                    <table>
                        <colgroup>${COLUMNS.map(c => `<col style="width: ${(c[1] / total * 100).toFixed(2)}%">`).join('')}</colgroup>
                        <thead><tr>${COLUMNS.map(([name], i) => `<th>${name}${i === 0 ? '<i>/</i>' : ''}</th>`).join('')}</tr></thead>
                        <tbody><tr>${COLUMNS.map(([, , value], i) => {
                            if (i === 0) return `<td><div><mt-icon name="trade"></mt-icon>${value}</div></td>`;
                            if (i === 11) return `<td><div class="result">${value}<button aria-label="Close order"><mt-icon name="close"></mt-icon></button></div></td>`;
                            return `<td>${value}</td>`;
                        }).join('')}</tr></tbody>
                        <tfoot><tr>
                            <td colspan="11"><div><mt-icon name="balance"></mt-icon>Balance: 10 000 JPY  Equity: 10 429  Margin: 9 799  Free margin: 630  Margin level: 106.43%</div></td>
                            <td>429</td>
                        </tr></tfoot>
                    </table>
                </div>
                <tab-strip marked tabs="Trade|Exposure|Account History|News|Alerts|Mailbox:6|Market|Articles:1705|Code Base|Experts|Journal"></tab-strip>
            </div>
        `;
    }
}
customElements.define('trade-terminal', TradeTerminal);

class StatusBar extends HTMLElement {
    constructor() {
        super();
        this.attachShadow({ mode: 'open' });
    }

    connectedCallback() {
        this.shadowRoot.innerHTML = `
            <style>
                :host {
                    display: flex;
                    align-items: center;
                    box-sizing: border-box;
                    height: 18px;
                    padding: 1px 0 0 1px;
                    border-top: 1px solid #cfcfcf;
                }
                span {
                    box-sizing: border-box;
                    width: 49px;
                    height: 12px;
                    border-left: 1px solid #b4b4b4;
                }
                .help { flex: 1; border: 0; }
                .profile { width: 81px; padding-left: 3px; }
                .wide { width: 71px; }
                .traffic {
                    display: flex;
                    align-items: center;
                    gap: 3px;
                    width: 91px;
                    padding-left: 3px;
                }
                .traffic mt-icon { width: 17px; height: 10px; }
                .size {
                    align-self: flex-end;
                    width: 10px;
                    height: 10px;
                    border: 0;
                    background: repeating-linear-gradient(135deg, transparent 0 1px, #a8a8a8 1px 2px, transparent 2px 3px);
                    clip-path: polygon(100% 0, 100% 100%, 0 100%);
                }
            </style>
            <span class="help">For Help, press F1</span>
            <span class="profile">Default</span>
            <span class="wide"></span><span></span><span></span><span></span><span></span><span></span>
            <span class="traffic"><mt-icon name="connection"></mt-icon>1942/1 kb</span>
            <span class="size"></span>
        `;
    }
}
customElements.define('status-bar', StatusBar);

class TerminalApp extends HTMLElement {
    constructor() {
        super();
        this.attachShadow({ mode: 'open' });
    }

    connectedCallback() {
        this.shadowRoot.innerHTML = `
            <style>
                :host {
                    display: flex;
                    flex-direction: column;
                    box-sizing: border-box;
                    min-height: 100vh;
                    padding: 0 1px;
                    background:
                        linear-gradient(#0d1f78, #1a5fa8 60%, #0c6c92) left / 1px 100% no-repeat,
                        linear-gradient(#6f93a5, #6f93a5) right / 1px 100% no-repeat,
                        var(--face);
                }
                .desk {
                    display: flex;
                    flex: 1;
                    margin-bottom: 2px;
                }
                .dock {
                    display: flex;
                    flex-direction: column;
                    flex: none;
                    width: 195px;
                    padding: 0 4px 4px 2px;
                    gap: 4px;
                }
                .charts {
                    display: flex;
                    flex-direction: column;
                    flex: 1;
                    min-width: 0;
                    padding-right: 1px;
                    border-bottom: 1px solid #d8d8d8;
                }
                .pager {
                    display: flex;
                    align-items: center;
                    gap: 7px;
                    margin-left: auto;
                    padding-right: 3px;
                }
                .pager mt-icon {
                    width: 6px;
                    height: 6px;
                }
            </style>
            <menu-bar></menu-bar>
            <tool-bars></tool-bars>
            <div class="desk">
                <div class="dock">
                    <market-watch></market-watch>
                    <navigator-tree></navigator-tree>
                </div>
                <div class="charts">
                    <price-chart></price-chart>
                    <tab-strip wide tabs="USDJPY,M5|USDJPY,H1|USDJPY,H1|USDJPY.std,H1" active="3">
                        <div class="pager"><mt-icon name="left"></mt-icon><mt-icon name="right"></mt-icon></div>
                    </tab-strip>
                </div>
            </div>
            <trade-terminal></trade-terminal>
            <status-bar></status-bar>
        `;
    }
}
customElements.define('terminal-app', TerminalApp);
</script>
</body>
</html>
